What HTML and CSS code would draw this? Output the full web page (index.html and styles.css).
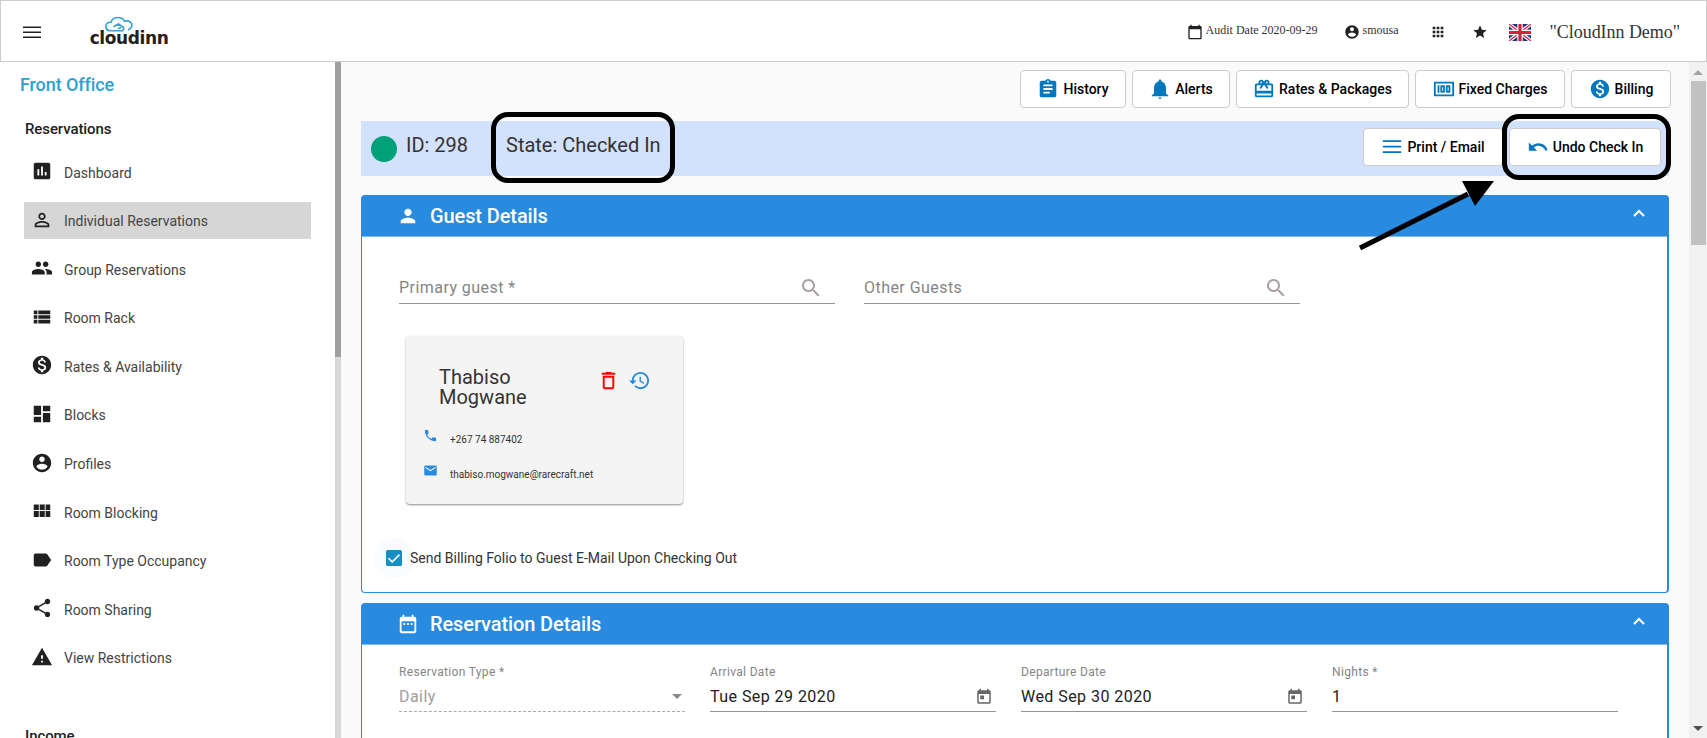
FILE: index.html
```html
<!DOCTYPE html>
<html lang="en">
<head>
    <meta charset="UTF-8">
    <meta name="viewport" content="width=device-width, initial-scale=1.0">
    <title>CloudInn - Reservation</title>
    <link rel="stylesheet" href="styles.css">
</head>
<body>
    <header class="topbar">
        <svg class="menu-icon" viewBox="0 0 24 24"><path d="M3 18h18v-1.500H3V18zm0-5h18v-1.500H3V13zm0-6.500V8h18V6.500H3z"/></svg>
        <div class="logo">
            <svg class="logo-cloud" viewBox="0 0 28 15" fill="none" stroke="#2d9fd0" stroke-width="1.600">
                <path d="M18.500 13.800H5.500C-1 13.200-.5 5 6 5.200C8-1.200 17.500-.5 19.500 4.200C24 2.800 28 6 26.500 9.500C26 11.500 24.500 12.500 23 13"/>
                <path d="M8.500 9.800L13.500 7L18.500 10.500V13.500M13 11.500l3-.8"/>
            </svg>
            <span class="logo-text">cloudinn</span>
        </div>
        <div class="topbar-right">
            <span class="audit"><svg class="icon" viewBox="0 0 24 24"><path d="M20 3h-1V1h-2v2H7V1H5v2H4c-1.100 0-2 .9-2 2v16c0 1.100.9 2 2 2h16c1.100 0 2-.9 2-2V5c0-1.100-.9-2-2-2zm0 18H4V8h16v13z"/></svg><span>Audit Date 2020-09-29</span></span>
            <span class="user"><svg class="icon" viewBox="0 0 24 24"><use href="#account"/></svg><span>smousa</span></span>
            <svg class="icon apps" viewBox="0 0 24 24"><path d="M4 8h4V4H4v4zm6 12h4v-4h-4v4zm-6 0h4v-4H4v4zm0-6h4v-4H4v4zm6 0h4v-4h-4v4zm6-10v4h4V4h-4zm-6 4h4V4h-4v4zm6 6h4v-4h-4v4zm0 6h4v-4h-4v4z"/></svg>
            <svg class="icon star" viewBox="0 0 24 24"><path d="M12 17.270L18.180 21l-1.640-7.030L22 9.240l-7.190-.61L12 2 9.190 8.630 2 9.240l5.460 4.730L5.820 21z"/></svg>
            <svg class="flag" viewBox="0 0 22 17" preserveAspectRatio="none">
                <rect width="22" height="17" fill="#1c3578"/>
                <path d="M0 0l22 17M22 0L0 17" stroke="#fff" stroke-width="3.600"/>
                <path d="M0 0l22 17M22 0L0 17" stroke="#d8203c" stroke-width="1.300"/>
                <path d="M11 0v17M0 8.500h22" stroke="#fff" stroke-width="5.400"/>
                <path d="M11 0v17M0 8.500h22" stroke="#d8203c" stroke-width="3.200"/>
            </svg>
            <span class="hotel">"CloudInn Demo"</span>
        </div>
    </header>

    <div class="layout">
        <aside class="sidebar">
            <nav class="sidebar-content">
                <h2>Front Office</h2>
                <h3>Reservations</h3>
                <a class="nav-item"><svg class="icon" viewBox="0 0 24 24"><path d="M19 3H5c-1.100 0-2 .9-2 2v14c0 1.100.9 2 2 2h14c1.100 0 2-.9 2-2V5c0-1.100-.9-2-2-2zM9 17H7v-7h2v7zm4 0h-2V7h2v10zm4 0h-2v-4h2v4z"/></svg>Dashboard</a>
                <a class="nav-item active"><svg class="icon" viewBox="0 0 24 24"><path d="M12 5.900a2.100 2.100 0 110 4.200 2.100 2.100 0 010-4.200m0 9c2.970 0 6.100 1.460 6.100 2.100v1.100H5.900V17c0-.64 3.130-2.100 6.100-2.100M12 4C9.790 4 8 5.790 8 8s1.790 4 4 4 4-1.790 4-4-1.790-4-4-4zm0 9c-2.670 0-8 1.340-8 4v3h16v-3c0-2.660-5.330-4-8-4z"/></svg>Individual Reservations</a>
                <a class="nav-item"><svg class="icon" viewBox="0 0 24 24"><path d="M16 11c1.660 0 2.990-1.340 2.990-3S17.660 5 16 5s-3 1.340-3 3 1.340 3 3 3zm-8 0c1.660 0 2.990-1.340 2.990-3S9.660 5 8 5 5 6.340 5 8s1.340 3 3 3zm0 2c-2.330 0-7 1.170-7 3.500V19h14v-2.500c0-2.330-4.670-3.500-7-3.500zm8 0c-.29 0-.62.02-.97.05 1.160.84 1.970 1.970 1.970 3.450V19h6v-2.500c0-2.330-4.670-3.500-7-3.500z"/></svg>Group Reservations</a>
                <a class="nav-item"><svg class="icon" viewBox="0 0 24 24"><path d="M3 14h4v-4H3v4zm0 5h4v-4H3v4zM3 9h4V5H3v4zm5 5h13v-4H8v4zm0 5h13v-4H8v4zM8 5v4h13V5H8z"/></svg>Room Rack</a>
                <a class="nav-item"><svg class="icon" viewBox="0 0 24 24"><path id="money" d="M12 2C6.480 2 2 6.480 2 12s4.480 10 10 10 10-4.480 10-10S17.520 2 12 2zm1.410 16.090V20h-2.670v-1.930c-1.710-.36-3.160-1.460-3.270-3.400h1.960c.1 1.050.82 1.870 2.650 1.870 1.960 0 2.400-.98 2.400-1.590 0-.83-.44-1.610-2.670-2.140-2.480-.6-4.180-1.620-4.180-3.670 0-1.720 1.390-2.840 3.110-3.210V4h2.670v1.950c1.860.45 2.790 1.860 2.850 3.390H14.300c-.05-1.110-.64-1.870-2.220-1.870-1.500 0-2.400.68-2.400 1.640 0 .84.65 1.390 2.670 1.910s4.180 1.390 4.180 3.910c-.01 1.830-1.380 2.830-3.120 3.160z"/></svg>Rates &amp; Availability</a>
                <a class="nav-item"><svg class="icon" viewBox="0 0 24 24"><path d="M3 13h8V3H3v10zm0 8h8v-6H3v6zm10 0h8V11h-8v10zm0-18v6h8V3h-8z"/></svg>Blocks</a>
                <a class="nav-item"><svg class="icon" viewBox="0 0 24 24"><path id="account" d="M12 2C6.480 2 2 6.480 2 12s4.480 10 10 10 10-4.480 10-10S17.520 2 12 2zm0 3c1.660 0 3 1.340 3 3s-1.340 3-3 3-3-1.340-3-3 1.340-3 3-3zm0 14.200c-2.500 0-4.710-1.280-6-3.220.03-1.990 4-3.080 6-3.080 1.990 0 5.970 1.090 6 3.080-1.290 1.940-3.500 3.220-6 3.220z"/></svg>Profiles</a>
                <a class="nav-item"><svg class="icon" viewBox="0 0 24 24"><path d="M3 11h5.500V5H3v6zm0 7.500h5.500v-6.500H3v6.500zm6.500 0H15v-6.500H9.500v6.500zm6.500 0h5v-6.500h-5v6.500zM9.500 11H15V5H9.500v6zM16 5v6h5V5h-5z"/></svg>Room Blocking</a>
                <a class="nav-item"><svg class="icon" viewBox="0 0 24 24"><path d="M17.630 5.840C17.270 5.330 16.670 5 16 5L5 5.010C3.900 5.010 3 5.900 3 7v10c0 1.100.9 1.990 2 1.990L16 19c.67 0 1.270-.33 1.630-.84L22 12l-4.370-6.160z"/></svg>Room Type Occupancy</a>
                <a class="nav-item"><svg class="icon" viewBox="0 0 24 24"><path d="M18 16.080c-.76 0-1.440.3-1.960.77L8.910 12.700c.05-.23.09-.46.09-.7s-.04-.47-.09-.7l7.050-4.110c.54.5 1.250.81 2.040.81 1.660 0 3-1.340 3-3s-1.340-3-3-3-3 1.340-3 3c0 .24.04.47.09.7L8.040 9.810C7.500 9.310 6.790 9 6 9c-1.660 0-3 1.340-3 3s1.340 3 3 3c.79 0 1.500-.31 2.040-.81l7.120 4.160c-.05.21-.08.43-.08.65 0 1.610 1.310 2.920 2.920 2.920s2.920-1.310 2.920-2.920-1.310-2.920-2.920-2.920z"/></svg>Room Sharing</a>
                <a class="nav-item"><svg class="icon" viewBox="0 0 24 24"><path d="M1 21h22L12 2 1 21zm12-3h-2v-2h2v2zm0-4h-2v-4h2v4z"/></svg>View Restrictions</a>
                <h3 class="next-group">Income</h3>
            </nav>
            <div class="sidebar-scroll"><div class="sidebar-thumb"></div></div>
        </aside>

        <main class="content">
            <div class="toolbar">
                <button class="btn history"><svg class="icon" viewBox="0 0 24 24"><path d="M19 3h-4.180C14.400 1.840 13.300 1 12 1s-2.400.84-2.820 2H5c-1.100 0-2 .9-2 2v14c0 1.100.9 2 2 2h14c1.100 0 2-.9 2-2V5c0-1.100-.9-2-2-2zm-7 0c.55 0 1 .45 1 1s-.45 1-1 1-1-.45-1-1 .45-1 1-1zm2 14H7v-2h7v2zm3-4H7v-2h10v2zm0-4H7V7h10v2z"/></svg>History</button>
                <button class="btn alerts"><svg class="icon" viewBox="0 0 24 24"><path d="M12 23c1.100 0 1.800-.7 1.800-1.600h-3.600c0 .9.700 1.600 1.800 1.600zm6.500-6.500v-6c0-3.100-1.900-5.900-5-6.600V2.800c0-.8-.7-1.300-1.500-1.300s-1.500.5-1.500 1.300v1.100c-3.100.7-5 3.500-5 6.600v6L3 19v1h18v-1l-2.500-2.500z"/></svg>Alerts</button>
                <button class="btn rates"><svg class="icon" viewBox="0 0 24 24"><path d="M20 6h-2.180c.11-.31.18-.65.18-1 0-1.660-1.340-3-3-3-1.050 0-1.960.54-2.500 1.350l-.5.67-.5-.68C10.960 2.540 10.050 2 9 2 7.340 2 6 3.340 6 5c0 .35.07.69.18 1H4c-1.110 0-1.990.89-1.990 2L2 19c0 1.110.89 2 2 2h16c1.110 0 2-.89 2-2V8c0-1.110-.89-2-2-2zm-5-2c.55 0 1 .45 1 1s-.45 1-1 1-1-.45-1-1 .45-1 1-1zM9 4c.55 0 1 .45 1 1s-.45 1-1 1-1-.45-1-1 .45-1 1-1zm11 15H4v-2h16v2zm0-5H4V8h5.080L7 10.830 8.620 12 11 8.760l1-1.360 1 1.360L15.380 12 17 10.830 14.920 8H20v6z"/></svg>Rates &amp; Packages</button>
                <button class="btn fixed"><svg class="icon" viewBox="0 0 24 24"><path d="M15 16h3c.55 0 1-.45 1-1V9c0-.55-.45-1-1-1h-3c-.55 0-1 .45-1 1v6c0 .55.45 1 1 1zm1-6h1v4h-1v-4zm-7 6h3c.55 0 1-.45 1-1V9c0-.55-.45-1-1-1H9c-.55 0-1 .45-1 1v6c0 .55.45 1 1 1zm1-6h1v4h-1v-4zM5 8h2v8H5zM1 4v16h22V4H1zm20 14H3V6h18v12z"/></svg>Fixed Charges</button>
                <button class="btn billing"><svg class="icon" viewBox="0 0 24 24"><use href="#money"/></svg>Billing</button>
            </div>

            <div class="status-bar">
                <span class="dot"></span>
                <span class="res-id">ID: 298</span>
                <span class="state">State: Checked In<span class="marker marker-state"></span></span>
                <div class="status-actions">
                    <button class="btn print"><svg class="icon" viewBox="0 0 24 24"><path d="M2 18.500h20v-2H2v2zm0-6h20v-2H2v2zm0-8v2h20v-2H2z"/></svg>Print / Email</button>
                    <button class="btn undo"><svg class="icon" viewBox="0 0 24 24"><path d="M12.500 8c-2.650 0-5.050.99-6.900 2.600L2 7v9h9l-3.620-3.620c1.390-1.160 3.160-1.880 5.120-1.880 3.540 0 6.550 2.310 7.600 5.500l2.370-.78C21.080 11.030 17.150 8 12.500 8z"/></svg>Undo Check In<span class="marker marker-undo"></span></button>
                </div>
                <svg class="arrow" viewBox="0 0 140 72"><path d="M2 68L110 14" stroke="#000" stroke-width="5"/><path d="M104 1h32l-19 25z"/></svg>
            </div>

            <section class="panel guest-panel">
                <div class="panel-header">
                    <svg class="icon" viewBox="0 0 24 24"><path d="M12 12c2.210 0 4-1.790 4-4s-1.790-4-4-4-4 1.790-4 4 1.790 4 4 4zm0 2c-2.670 0-8 1.340-8 4v2h16v-2c0-2.660-5.330-4-8-4z"/></svg>
                    <span>Guest Details</span>
                    <svg class="chevron" viewBox="0 0 12 8"><path d="M1 7l5-5 5 5"/></svg>
                </div>
                <div class="panel-body">
                    <div class="guest-search">
                        <label class="search-field">Primary guest *<svg class="icon" viewBox="0 0 24 24"><path id="search" d="M15.500 14h-.79l-.28-.27C15.410 12.590 16 11.110 16 9.500 16 5.910 13.090 3 9.500 3S3 5.910 3 9.500 5.910 16 9.500 16c1.610 0 3.090-.59 4.230-1.570l.27.28v.79l5 4.990L20.490 19l-4.990-5zm-6 0C7.010 14 5 11.990 5 9.500S7.010 5 9.500 5 14 7.010 14 9.500 11.990 14 9.500 14z"/></svg></label>
                        <label class="search-field">Other Guests<svg class="icon" viewBox="0 0 24 24"><use href="#search"/></svg></label>
                    </div>
                    <div class="guest-card">
                        <div class="guest-top">
                            <div class="guest-name">Thabiso Mogwane</div>
                            <svg class="icon delete" viewBox="0 0 24 24"><path d="M6 19c0 1.100.9 2 2 2h8c1.100 0 2-.9 2-2V7H6v12zM8 9h8v10H8V9zm7.500-5l-1-1h-5l-1 1H5v2h14V4z"/></svg>
                            <svg class="icon restore" viewBox="0 0 24 24"><path d="M13 3c-4.970 0-9 4.030-9 9H1l3.890 3.890.07.14L9 12H6c0-3.870 3.130-7 7-7s7 3.130 7 7-3.130 7-7 7c-1.930 0-3.680-.79-4.940-2.060l-1.420 1.420C8.270 19.990 10.510 21 13 21c4.970 0 9-4.030 9-9s-4.030-9-9-9zm-1 5v5l4.280 2.540.72-1.210-3.500-2.080V8H12z"/></svg>
                        </div>
                        <div class="contact"><svg class="icon" viewBox="0 0 24 24"><path d="M6.620 10.790c1.440 2.830 3.760 5.140 6.590 6.590l2.200-2.200c.27-.27.67-.36 1.020-.24 1.120.37 2.330.57 3.570.57.55 0 1 .45 1 1V20c0 .55-.45 1-1 1-9.390 0-17-7.610-17-17 0-.55.45-1 1-1h3.500c.55 0 1 .45 1 1 0 1.250.2 2.450.57 3.570.11.35.03.74-.25 1.020l-2.200 2.200z"/></svg><span>+267 74 887402</span></div>
                        <div class="contact"><svg class="icon" viewBox="0 0 24 24"><path d="M20 4H4c-1.100 0-1.990.9-1.990 2L2 18c0 1.100.9 2 2 2h16c1.100 0 2-.9 2-2V6c0-1.100-.9-2-2-2zm0 4l-8 5-8-5V6l8 5 8-5v2z"/></svg><span>thabiso.mogwane@rarecraft.net</span></div>
                    </div>
                    <div class="send-folio">
                        <span class="check-ripple"><svg class="checkbox" viewBox="0 0 16 16"><rect width="16" height="16" rx="1.500" fill="#1690c4"/><path d="M2.500 8.200l3.700 3.700 7.300-7.300" fill="none" stroke="#fff" stroke-width="1.500"/></svg></span>
                        <span>Send Billing Folio to Guest E-Mail Upon Checking Out</span>
                    </div>
                </div>
            </section>

            <section class="panel reservation-panel">
                <div class="panel-header">
                    <svg class="icon" viewBox="0 0 24 24"><path d="M9 11H7v2h2v-2zm4 0h-2v2h2v-2zm4 0h-2v2h2v-2zm2-7h-1V2h-2v2H8V2H6v2H5c-1.110 0-1.990.9-1.990 2L3 20c0 1.100.89 2 2 2h14c1.100 0 2-.9 2-2V6c0-1.100-.9-2-2-2zm0 16H5V9h14v11z"/></svg>
                    <span>Reservation Details</span>
                    <svg class="chevron" viewBox="0 0 12 8"><path d="M1 7l5-5 5 5"/></svg>
                </div>
                <div class="form-row">
                    <div class="field disabled">
                        <label>Reservation Type *</label>
                        <div class="value">Daily<span class="caret"></span></div>
                    </div>
                    <div class="field">
                        <label>Arrival Date</label>
                        <div class="value">Tue Sep 29 2020<svg class="icon" viewBox="0 0 24 24"><path id="event" d="M19 3h-1V1h-2v2H8V1H6v2H5c-1.110 0-1.990.9-1.990 2L3 19c0 1.100.89 2 2 2h14c1.100 0 2-.9 2-2V5c0-1.100-.9-2-2-2zm0 16H5V8h14v11zM7 10h5v5H7z"/></svg></div>
                    </div>
                    <div class="field">
                        <label>Departure Date</label>
                        <div class="value">Wed Sep 30 2020<svg class="icon" viewBox="0 0 24 24"><use href="#event"/></svg></div>
                    </div>
                    <div class="field">
                        <label>Nights *</label>
                        <div class="value">1</div>
                    </div>
                </div>
            </section>
        </main>

        <div class="page-scroll">
            <span class="scroll-up"></span>
            <div class="page-thumb"></div>
            <span class="scroll-down"></span>
        </div>
    </div>
</body>
</html>
```
FILE: styles.css
```css
* {
    margin: 0;
    padding: 0;
    box-sizing: border-box;
}

body {
    height: 738px;
    overflow: hidden;
    display: flex;
    flex-direction: column;
    font-family: Roboto, sans-serif;
    color: #333;
    background: #fafafa;
}

svg {
    display: block;
    flex: none;
    fill: currentColor;
}

/* top bar */
.topbar {
    height: 62px;
    flex: none;
    display: flex;
    align-items: center;
    padding: 2px 26px 0 19px;
    background: #fff;
    border: 1px solid #ccc;
    color: #212121;
}

.menu-icon {
    width: 24px;
    height: 24px;
}

.logo {
    margin-left: 44px;
    width: 82px;
    height: 30px;
    display: flex;
    flex-direction: column;
    align-items: center;
}

.logo-cloud {
    width: 28px;
    height: 15px;
    margin-right: 20px;
    fill: none;
}

.logo-text {
    font-family: "DejaVu Sans", sans-serif;
    font-size: 17px;
    font-weight: bold;
    line-height: 13px;
    letter-spacing: -0.4px;
}

.topbar-right {
    margin-left: auto;
    display: flex;
    align-items: center;
    font-family: "Liberation Serif", serif;
    font-size: 12px;
    color: #333;
}

.topbar-right .icon {
    width: 16px;
    height: 16px;
    fill: #212121;
}

.audit, .user {
    display: flex;
    align-items: center;
    gap: 3px;
}

.audit span, .user span {
    margin-top: -3px;
}

.user {
    margin-left: 26px;
}

.apps {
    margin-left: 31px;
}

.star {
    margin-left: 26px;
}

.flag {
    width: 22px;
    height: 17px;
    margin-left: 21px;
}

.hotel {
    margin-left: 19px;
    font-size: 18px;
    letter-spacing: -0.05px;
}

.layout {
    flex: 1;
    min-height: 0;
    display: flex;
}

/* sidebar */
.sidebar {
    width: 341px;
    flex: none;
    display: flex;
    background: #fff;
}

.sidebar-content {
    width: 335px;
    padding: 12px 24px 0;
    overflow: hidden;
}

.sidebar h2 {
    margin-left: -4px;
    font-size: 18px;
    line-height: 22px;
    font-weight: 500;
    letter-spacing: -0.1px;
    color: #2d9fd0;
}

.sidebar h3 {
    margin: 23px 0 14px 1px;
    font-size: 15px;
    line-height: 20px;
    font-weight: 500;
    letter-spacing: -0.1px;
    color: #212121;
}

.sidebar .next-group {
    margin-top: 50px;
}

.nav-item {
    height: 37px;
    margin-bottom: 11.6px;
    padding-left: 7px;
    display: flex;
    align-items: center;
    gap: 11px;
    font-size: 14px;
    line-height: 20px;
    padding-top: 2px;
    color: #444;
}

.nav-item .icon {
    width: 22px;
    height: 22px;
    margin-top: -3px;
    fill: #212121;
}

.nav-item.active {
    background: #d6d6d6;
}

.sidebar-scroll {
    width: 6px;
    background: #d8d8d8;
}

.sidebar-thumb {
    height: 295px;
    background: #a0a0a0;
}

/* content */
.content {
    flex: 1;
    padding: 8px 20px 0;
    display: flex;
    flex-direction: column;
    overflow: hidden;
}

.btn {
    height: 38px;
    display: flex;
    align-items: center;
    justify-content: center;
    gap: 4px;
    background: #fff;
    border: 1px solid #ccc;
    border-radius: 4px;
    font-family: Roboto, sans-serif;
    font-size: 14px;
    font-weight: 500;
    color: #000;
    white-space: nowrap;
}

.btn .icon {
    width: 22px;
    height: 22px;
    fill: #0277bd;
}

.toolbar {
    display: flex;
    justify-content: flex-end;
    gap: 6px;
    margin-right: -2px;
}

.history { width: 106px; }
.alerts { width: 98px; }
.rates { width: 173px; }
.fixed { width: 150px; }
.billing { width: 100px; }

.status-bar {
    position: relative;
    height: 55px;
    flex: none;
    margin-top: 13px;
    padding: 0 8px 0 10px;
    display: flex;
    align-items: center;
    background: #d3e2fc;
    font-size: 20px;
    color: #333;
}

.dot {
    width: 26px;
    height: 26px;
    border-radius: 50%;
    background: #00a078;
}

.res-id {
    width: 100px;
    margin: -8px 0 0 9px;
}

.state {
    position: relative;
    margin-top: -8px;
}

.status-actions {
    margin: -3px 0 0 auto;
    display: flex;
    gap: 6px;
}

.print {
    width: 140px;
}

.undo {
    position: relative;
    width: 152px;
}

.marker {
    position: absolute;
    border: 5px solid #000;
    border-radius: 17px;
}

.marker-state {
    left: -15px;
    top: -21px;
    width: 184px;
    height: 71px;
}

.marker-undo {
    left: -8px;
    top: -15px;
    width: 169px;
    height: 66px;
}

.arrow {
    position: absolute;
    left: 997px;
    top: 59px;
    width: 140px;
    height: 72px;
    fill: #000;
}

/* panels */
.panel {
    flex: none;
    background: #fff;
    border: 1px solid #288be0;
    border-right-width: 2px;
    border-radius: 4px;
}

.guest-panel {
    height: 398px;
    margin-top: 19px;
}

.reservation-panel {
    height: 200px;
    margin-top: 10px;
}

.panel-header {
    height: 41px;
    padding: 0 22px 0 35px;
    display: flex;
    align-items: center;
    background: #288be0;
    border-bottom: 1px solid #7fb9ec;
    color: #fff;
    font-size: 20px;
    font-weight: 500;
    letter-spacing: -0.1px;
}

.panel-header .icon {
    width: 22px;
    height: 22px;
    margin-right: 11px;
}

.chevron {
    width: 12px;
    height: 8px;
    margin: -6px 0 0 auto;
    fill: none;
    stroke: #fff;
    stroke-width: 2;
}

.panel-body {
    padding: 30px 37px 0;
}

.guest-search {
    display: flex;
    gap: 29px;
}

.search-field {
    width: 436px;
    height: 37px;
    padding: 5px 12px 0 0;
    display: flex;
    align-items: center;
    justify-content: space-between;
    border-bottom: 1px solid #949494;
    font-size: 16px;
    letter-spacing: 0.45px;
    color: #858585;
}

.search-field .icon {
    width: 24px;
    height: 24px;
    fill: #a9a1a1;
}

.guest-card {
    width: 277px;
    height: 168px;
    margin: 32px 0 0 7px;
    padding: 31px 17px 0;
    background: #f4f4f4;
    border-radius: 4px;
    box-shadow: 0 1px 2px rgba(0, 0, 0, .45);
}

.guest-top {
    height: 55px;
    padding-left: 16px;
    display: flex;
    align-items: flex-start;
}

.guest-name {
    width: 158px;
    padding-right: 50px;
    font-size: 20px;
    line-height: 20px;
}

.delete, .restore {
    width: 23px;
    height: 23px;
    margin-top: 2px;
}

.delete {
    fill: #f00;
}

.restore {
    margin-left: 8px;
    fill: #288be0;
}

.contact {
    height: 35px;
    display: flex;
    align-items: center;
    gap: 12px;
    font-size: 10px;
}

.contact .icon {
    width: 15px;
    height: 15px;
    margin-top: -8px;
    fill: #288be0;
}

.send-folio {
    display: flex;
    align-items: center;
    margin: 34px 0 0 -25px;
    font-size: 14px;
}

.check-ripple {
    width: 40px;
    height: 40px;
    margin-right: -4px;
    display: flex;
    align-items: center;
    justify-content: center;
    border-radius: 50%;
    background: #f9fbff;
}

.checkbox {
    width: 16px;
    height: 16px;
}

.form-row {
    padding: 17px 48px 0 37px;
    display: grid;
    grid-template-columns: repeat(4, 286px);
    gap: 25px;
}

.field label {
    display: block;
    font-size: 12px;
    line-height: 20px;
    letter-spacing: 0.33px;
    color: #858585;
}

.value {
    height: 30px;
    padding-right: 3px;
    display: flex;
    align-items: center;
    justify-content: space-between;
    border-bottom: 1px solid #949494;
    font-size: 16px;
    letter-spacing: 0.45px;
    color: #212121;
}

.value .icon {
    width: 18px;
    height: 18px;
    fill: #666;
}

.disabled .value {
    border-bottom: 1px dashed #aaa;
    color: #9e9e9e;
}

.caret {
    border: 5px solid transparent;
    border-top-color: #8a8a8a;
    border-bottom: 0;
}

/* page scrollbar */
.page-scroll {
    width: 18px;
    flex: none;
    padding: 8px 1px 7px;
    display: flex;
    flex-direction: column;
    align-items: center;
    background: #f1f1f1;
}

.scroll-up {
    border: 5px solid transparent;
    border-bottom-color: #a3a3a3;
    border-top: 0;
}

.page-thumb {
    width: 15px;
    height: 164px;
    margin-top: 6px;
    background: #c1c1c1;
}

.scroll-down {
    margin-top: auto;
    border: 5px solid transparent;
    border-top-color: #505050;
    border-bottom: 0;
}
```
